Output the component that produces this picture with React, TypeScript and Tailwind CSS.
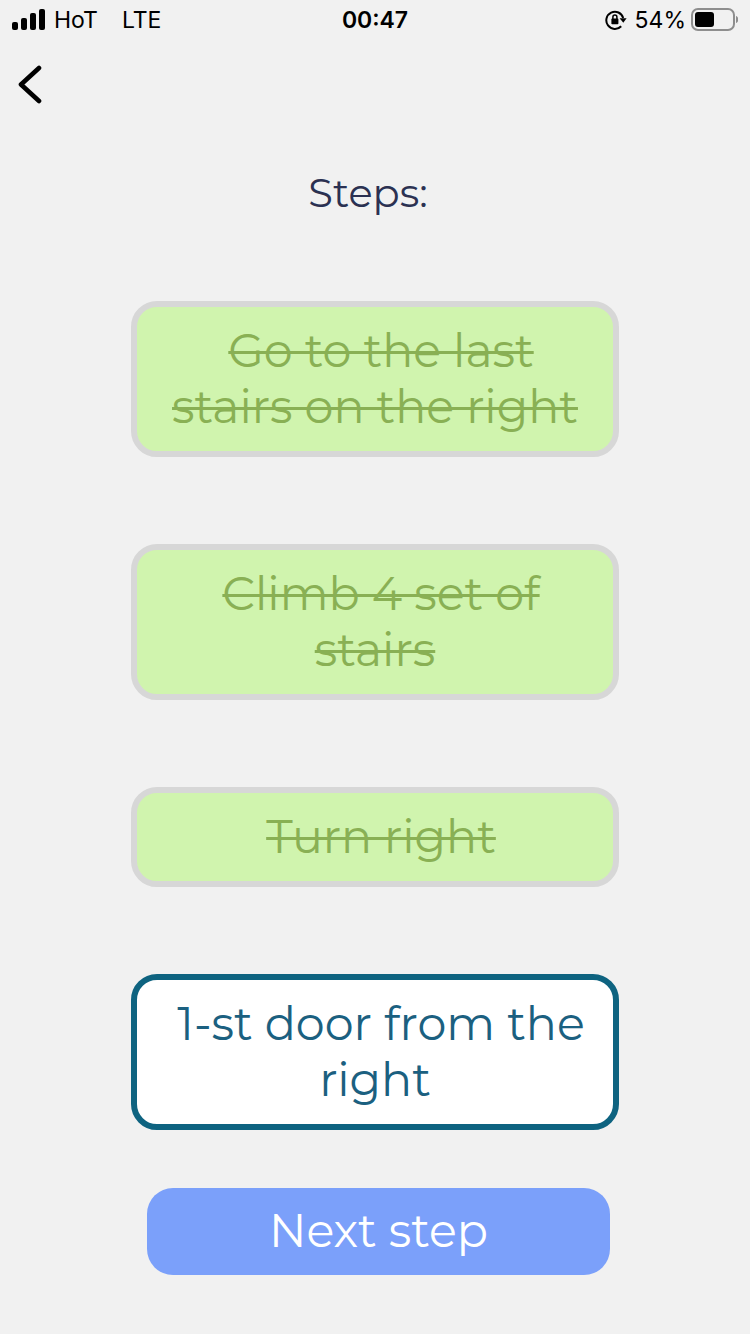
type Step = { text: string; done: boolean };

const steps: Step[] = [
  { text: "Go to the last stairs on the right", done: true },
  { text: "Climb 4 set of stairs", done: true },
  { text: "Turn right", done: true },
  { text: "1-st door from the right", done: false },
];

function SignalIcon() {
  return (
    <svg width="34" height="22" viewBox="0 0 34 22" aria-hidden="true">
      <rect x="0" y="13" width="6" height="8" rx="2" />
      <rect x="9" y="9" width="6" height="12" rx="2" />
      <rect x="18" y="4" width="6" height="17" rx="2" />
      <rect x="27" y="0" width="6" height="21" rx="2" />
    </svg>
  );
}

function RotationLockIcon() {
  return (
    <svg width="22" height="22" viewBox="0 0 22 22" fill="none" aria-hidden="true">
      <path d="M16.2 17.2A8.6 8.6 0 1 1 18.2 9" stroke="#000" strokeWidth="2" />
      <path d="M14.6 9.2h7l-3.3 4.6z" fill="#000" />
      <rect x="6.4" y="9.6" width="7" height="5.6" rx="0.8" fill="#000" />
      <path d="M7.9 10V8a2 2 0 0 1 4 0v2" stroke="#000" strokeWidth="1.5" />
    </svg>
  );
}

function BatteryIcon() {
  return (
    <svg width="48" height="24" viewBox="0 0 48 24" fill="none" aria-hidden="true">
      <rect x="2" y="1" width="42" height="21" rx="6" stroke="#8e8e8e" strokeWidth="2" />
      <rect x="5" y="4" width="19" height="15" rx="3" fill="#000" />
      <path d="M46 8c3 1 3 6 0 7z" fill="#8e8e8e" />
    </svg>
  );
}

function StatusBar() {
  return (
    <header className="grid h-10 grid-cols-3 items-center px-3 font-['Inter',sans-serif] text-[23px] leading-7 text-black">
      <div className="flex items-center gap-2">
        <SignalIcon />
        <span>HoT</span>
        <span className="ml-4">LTE</span>
      </div>
      <time className="text-center font-semibold">00:47</time>
      <div className="flex items-center justify-end gap-1">
        <RotationLockIcon />
        <span className="ml-1">54%</span>
        <BatteryIcon />
      </div>
    </header>
  );
}

function StepCard({ text, done }: Step) {
  const look = done
    ? "border-[#d7d7d7] bg-[#d0f4ae] text-[#89b054] line-through decoration-3"
    : "border-[#0e6380] bg-white text-[#1b6080]";
  return (
    <li className={`rounded-[26px] border-6 px-4 py-4 text-center indent-3 text-[46px] leading-14 ${look}`}>
      {text}
    </li>
  );
}

export default function App() {
  return (
    <div className="min-h-screen bg-[#f1f1f1] font-['Montserrat','Inter',sans-serif]">
      <StatusBar />
      <nav className="flex h-22 items-center px-4">
        <button type="button" aria-label="Back" className="flex">
          <svg width="28" height="40" viewBox="0 0 28 40" fill="none" aria-hidden="true">
            <path d="M23 4L5 20.500L23 37" stroke="#000" strokeWidth="4.600" strokeLinecap="round" strokeLinejoin="round" />
          </svg>
        </button>
      </nav>
      <main className="px-[131px]">
        <h1 className="mt-[37px] mr-[14px] text-center text-[40px] leading-14 font-normal text-[#2b3152]">Steps:</h1>
        <ol className="mt-20 flex flex-col gap-[87px]">
          {steps.map((step) => (
            <StepCard key={step.text} {...step} />
          ))}
        </ol>
        <div className="mt-[58px] mr-[9px] ml-4 flex">
          <button type="button" className="flex-1 rounded-[26px] bg-[#7ba0fa] pt-[15px] pb-4 text-[46px] leading-14 text-white">
            Next step
          </button>
        </div>
      </main>
    </div>
  );
}
